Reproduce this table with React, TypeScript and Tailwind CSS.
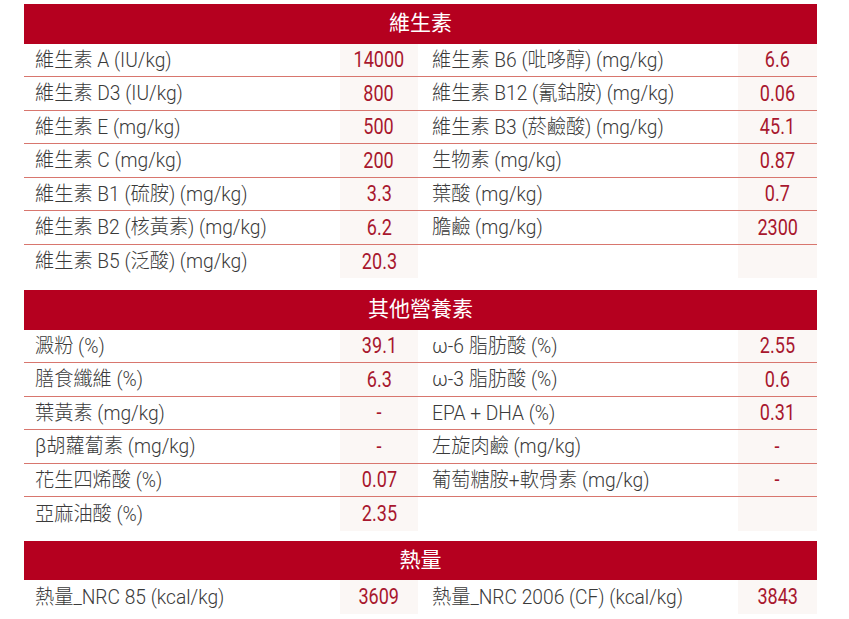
import React from 'react';

type Cell = { label: string; value: string } | null;
type Row = [Cell, Cell];

const sections: { title: string; rows: Row[] }[] = [
  {
    title: '維生素',
    rows: [
      [{ label: '維生素 A (IU/kg)', value: '14000' }, { label: '維生素 B6 (吡哆醇) (mg/kg)', value: '6.6' }],
      [{ label: '維生素 D3 (IU/kg)', value: '800' }, { label: '維生素 B12 (氰鈷胺) (mg/kg)', value: '0.06' }],
      [{ label: '維生素 E (mg/kg)', value: '500' }, { label: '維生素 B3 (菸鹼酸) (mg/kg)', value: '45.1' }],
      [{ label: '維生素 C (mg/kg)', value: '200' }, { label: '生物素 (mg/kg)', value: '0.87' }],
      [{ label: '維生素 B1 (硫胺) (mg/kg)', value: '3.3' }, { label: '葉酸 (mg/kg)', value: '0.7' }],
      [{ label: '維生素 B2 (核黃素) (mg/kg)', value: '6.2' }, { label: '膽鹼 (mg/kg)', value: '2300' }],
      [{ label: '維生素 B5 (泛酸) (mg/kg)', value: '20.3' }, null],
    ],
  },
  {
    title: '其他營養素',
    rows: [
      [{ label: '澱粉 (%)', value: '39.1' }, { label: 'ω-6 脂肪酸 (%)', value: '2.55' }],
      [{ label: '膳食纖維 (%)', value: '6.3' }, { label: 'ω-3 脂肪酸 (%)', value: '0.6' }],
      [{ label: '葉黃素 (mg/kg)', value: '-' }, { label: 'EPA + DHA (%)', value: '0.31' }],
      [{ label: 'β胡蘿蔔素 (mg/kg)', value: '-' }, { label: '左旋肉鹼 (mg/kg)', value: '-' }],
      [{ label: '花生四烯酸 (%)', value: '0.07' }, { label: '葡萄糖胺+軟骨素 (mg/kg)', value: '-' }],
      [{ label: '亞麻油酸 (%)', value: '2.35' }, null],
    ],
  },
  {
    title: '熱量',
    rows: [[{ label: '熱量_NRC 85 (kcal/kg)', value: '3609' }, { label: '熱量_NRC 2006 (CF) (kcal/kg)', value: '3843' }]],
  },
];

function Pair({ cell, last, left }: { cell: Cell; last: boolean; left: boolean }) {
  const line = last ? '' : 'border-b border-[#d8766e]';
  return (
    <>
      <div className={`flex items-center ${left ? 'pl-[11px]' : 'pl-[14px]'} text-[#3a3a3a] font-light whitespace-nowrap ${line}`}>
        <span className="inline-block origin-left scale-x-[0.96]">{cell?.label}</span>
      </div>
      <div className={`flex items-center justify-center bg-[#fbf7f5] text-[#a8172e] text-[22px] ${line}`}>
        <span className="inline-block scale-x-[0.82]">{cell?.value}</span>
      </div>
    </>
  );
}

export default function App() {
  return (
    <div
      className="w-[849px] h-[619px] bg-white pt-[4px] pl-[24px]"
      style={{ fontFamily: 'Roboto, "Noto Sans CJK TC", sans-serif' }}
    >
      <div className="w-[793px] flex flex-col">
        {sections.map((s, si) => (
          <div key={s.title} className={si === 0 ? '' : si === 1 ? 'mt-[12px]' : 'mt-[10px]'}>
            <div className="h-[39.5px] bg-[#b5001f] text-white text-[21px] flex items-center justify-center">
              {s.title}
            </div>
            <div className="grid grid-cols-[316px_78px_320px_79px] auto-rows-[33.5px] text-[20px]">
              {s.rows.map((r, ri) => {
                const last = ri === s.rows.length - 1;
                return (
                  <React.Fragment key={ri}>
                    <Pair cell={r[0]} last={last} left />
                    <Pair cell={r[1]} last={last} left={false} />
                  </React.Fragment>
                );
              })}
            </div>
          </div>
        ))}
      </div>
    </div>
  );
}
